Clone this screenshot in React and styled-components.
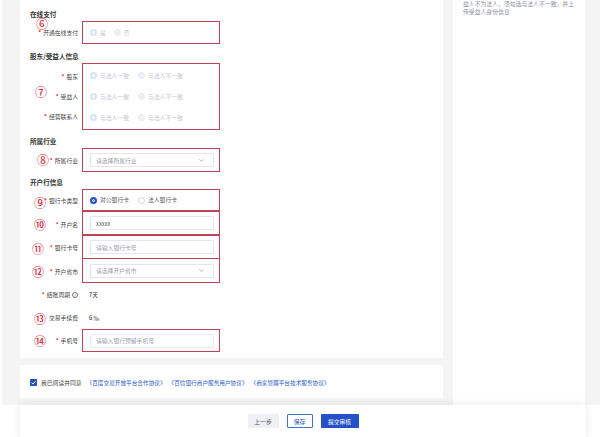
import React from "react";
import styled, { createGlobalStyle } from "styled-components";
import { ChevronDown } from "lucide-react";

const GlobalStyle = createGlobalStyle`
  html, body {
    margin: 0;
    padding: 0;
    height: 437px;
    overflow: hidden;
    background: #fff;
    font-family: "Noto Sans CJK SC", "Noto Sans", sans-serif;
  }
  * {
    box-sizing: border-box;
  }
`;

function App() {
  return (
    <Page>
      <GlobalStyle />
      <Content>
        <MainColumn>
          <FormCard>
            <Heading>在线支付</Heading>
            <Field>
              <Marker $left={16} $top={-3}>⑥</Marker>
              <Label>开通在线支付</Label>
              <RedBox $height={23}>
                <RadioRow first="是" second="否" gap={8} disabled />
              </RedBox>
            </Field>

            <Heading $height={19}>股东/受益人信息</Heading>
            <Field>
              <Marker $left={15} $top={23}>⑦</Marker>
              <LabelStack>
                <Label>股东</Label>
                <Label>受益人</Label>
                <Label>经营联系人</Label>
              </LabelStack>
              <RedBox $height={67}>
                <RadioStack>
                  <RadioRow first="与法人一致" second="与法人不一致" disabled />
                  <RadioRow first="与法人一致" second="与法人不一致" disabled />
                  <RadioRow first="与法人一致" second="与法人不一致" disabled />
                </RadioStack>
              </RedBox>
            </Field>

            <Heading $height={18}>所属行业</Heading>
            <Field>
              <Marker $left={17} $top={6}>⑧</Marker>
              <Label>所属行业</Label>
              <RedBox $height={24}>
                <Select placeholder="请选择所属行业" />
              </RedBox>
            </Field>

            <Heading $height={17}>开户行信息</Heading>
            <Field>
              <Marker $left={14} $top={8}>⑨</Marker>
              <Label>银行卡类型</Label>
              <RedBox $height={23} $thick>
                <RadioRow first="对公银行卡" second="法人银行卡" />
              </RedBox>
            </Field>
            <Field>
              <Marker $left={14} $top={7}>⑩</Marker>
              <Label>开户名</Label>
              <RedBox $height={25} $thick $joined>
                <TextBox>xxxxx</TextBox>
              </RedBox>
            </Field>
            <Field>
              <Marker $left={12} $top={7}>⑪</Marker>
              <Label>银行卡号</Label>
              <RedBox $height={24} $joined>
                <TextBox $placeholder>请输入银行卡号</TextBox>
              </RedBox>
            </Field>
            <Field>
              <Marker $left={12} $top={7}>⑫</Marker>
              <Label>开户省市</Label>
              <RedBox $height={25} $joined>
                <Select placeholder="请选择开户省市" />
              </RedBox>
            </Field>

            <InfoRow>
              <Label>
                结账周期<Hint>?</Hint>
              </Label>
              <Value>7天</Value>
            </InfoRow>
            <InfoRow>
              <Marker $left={14} $top={7}>⑬</Marker>
              <Label $plain>交易手续费</Label>
              <Value>6 ‰</Value>
            </InfoRow>
            <Field>
              <Marker $left={14} $top={6}>⑭</Marker>
              <Label>手机号</Label>
              <RedBox $height={23}>
                <TextBox $placeholder $light>请输入银行预留手机号</TextBox>
              </RedBox>
            </Field>
          </FormCard>

          <AgreementCard>
            <CheckMark viewBox="0 0 7 7">
              <rect width="7" height="7" rx="0.8" fill="#2450c0" />
              <path d="M1.5 3.6 L3 5 L5.6 2.1" fill="none" stroke="#fff" strokeWidth="0.9" />
            </CheckMark>
            <AgreeText>我已阅读并同意</AgreeText>
            <Links>
              <a>《百度交易开放平台合作协议》</a>
              <a>《百信银行商户服务用户协议》</a>
              <a>《商家管理平台技术服务协议》</a>
            </Links>
          </AgreementCard>
        </MainColumn>

        <SidePanel>
          <SideText>益人不为法人，须勾选与法人不一致，并上传受益人身份信息</SideText>
        </SidePanel>
      </Content>

      <Footer>
        <FooterButton>上一步</FooterButton>
        <FooterButton $variant="outline">保存</FooterButton>
        <FooterButton $variant="primary">提交审核</FooterButton>
      </Footer>
    </Page>
  );
}

function RadioRow({ first, second, gap, disabled }) {
  return (
    <Radios $gap={gap}>
      <RadioOption $disabled={disabled}>
        <RadioDot $checked $disabled={disabled} />
        {first}
      </RadioOption>
      <RadioOption $disabled={disabled}>
        <RadioDot $disabled={disabled} />
        {second}
      </RadioOption>
    </Radios>
  );
}

function Select({ placeholder }) {
  return (
    <TextBox $placeholder>
      {placeholder}
      <ChevronDown size={7} color="#7d8494" strokeWidth={2} />
    </TextBox>
  );
}

export default App;

const Page = styled.div`
  width: 600px;
  height: 437px;
  padding-left: 2px;
  overflow: hidden;
  display: flex;
  flex-direction: column;
`;
const Content = styled.div`
  height: 405px;
  padding: 0 15px 0 18px;
  background: #f4f4f5;
  display: flex;
  gap: 10px;
`;
const MainColumn = styled.div`
  width: 423px;
  display: flex;
  flex-direction: column;
  gap: 7px;
`;
const FormCard = styled.div`
  height: 358px;
  padding-top: 7px;
  background: #fff;
`;
const Heading = styled.div`
  height: ${(p) => p.$height || 14}px;
  padding: 0 0 2px 10px;
  display: flex;
  align-items: flex-end;
  font-size: 6.6px;
  line-height: 10px;
  font-weight: 700;
  color: #333;
`;
const Field = styled.div`
  position: relative;
  display: grid;
  grid-template-columns: 62px 138px;
`;
const InfoRow = styled(Field)`
  height: 23px;
  align-items: center;
`;
const LabelStack = styled.div`
  padding: 3px 0;
  display: grid;
  grid-auto-rows: 1fr;
`;
const Label = styled.div`
  padding-right: 4px;
  display: flex;
  align-items: center;
  justify-content: flex-end;
  font-size: 5.8px;
  color: #444;

  &::before {
    content: "${(p) => (p.$plain ? "" : "*")}";
    margin-right: 2px;
    color: #d83a3a;
    font-weight: 700;
  }
`;
const Hint = styled.span`
  width: 6px;
  height: 6px;
  margin-left: 2px;
  border: 0.6px solid #777;
  border-radius: 50%;
  display: inline-flex;
  align-items: center;
  justify-content: center;
  font-size: 4px;
  color: #777;
`;
const Marker = styled.span`
  position: absolute;
  left: ${(p) => p.$left}px;
  top: ${(p) => p.$top}px;
  font-size: 12px;
  font-weight: 500;
  line-height: 11px;
  color: #d63348;
`;
const RedBox = styled.div`
  height: ${(p) => p.$height}px;
  margin-top: ${(p) => (p.$joined ? "-1px" : "0")};
  padding: 0 5px 0 7px;
  border: 1.4px solid #bf4257;
  border-bottom-width: ${(p) => (p.$thick ? "2px" : "1.4px")};
  display: flex;
  align-items: center;
`;
const RadioStack = styled.div`
  width: 100%;
  height: 100%;
  padding: 1px 0;
  display: grid;
  grid-auto-rows: 1fr;
  align-items: center;
`;
const Radios = styled.div`
  display: flex;
  gap: ${(p) => p.$gap || 9}px;
`;
const RadioOption = styled.label`
  display: flex;
  align-items: center;
  gap: 3px;
  font-size: 5.8px;
  line-height: 10px;
  color: ${(p) => (p.$disabled ? "#c3c7d2" : "#555")};
`;
const RadioDot = styled.span`
  width: 7px;
  height: 7px;
  border-radius: 50%;
  background: #fff;
  border: ${(p) =>
    p.$checked
      ? p.$disabled
        ? "2px solid #d6e2f7"
        : "2px solid #2450c8"
      : p.$disabled
      ? "0.7px solid #e6e9f0"
      : "0.7px solid #cfd3dc"};
  ${(p) => p.$disabled && !p.$checked && "background: #eff1f6;"}
  ${(p) => p.$checked && !p.$disabled && "background: #2450c8; box-shadow: inset 0 0 0 1px #fff;"}
`;
const TextBox = styled.div`
  width: 100%;
  height: 14px;
  padding: 0 8px 0 5px;
  border: 1px solid ${(p) => (p.$light ? "#e8ebf0" : "#e3e6ec")};
  border-radius: 1px;
  display: flex;
  align-items: center;
  justify-content: space-between;
  font-size: 5.8px;
  color: ${(p) => (p.$placeholder ? "#9aa0ad" : "#555")};
`;
const Value = styled.div`
  padding-left: 7px;
  font-size: 5.8px;
  font-weight: 500;
  color: #444;
`;
const AgreementCard = styled.div`
  height: 33px;
  padding-left: 10px;
  background: #fff;
  display: flex;
  align-items: center;
  padding-top: 1px;
`;
const CheckMark = styled.svg`
  width: 7px;
  height: 7px;
  margin-right: 4px;
`;
const AgreeText = styled.span`
  margin-right: 5px;
  font-size: 5.8px;
  color: #444;
`;
const Links = styled.div`
  display: flex;
  gap: 3px;
  font-size: 5.65px;
  color: #2a58c6;
`;
const SidePanel = styled.div`
  width: 132px;
  padding: 0 10px;
  background: #fff;
`;
const SideText = styled.div`
  font-size: 5.85px;
  line-height: 8px;
  color: #8a8f99;
`;
const Footer = styled.div`
  position: relative;
  width: 566px;
  height: 32px;
  margin-left: 18px;
  background: #fff;
  box-shadow: 0 0 8px rgba(0, 0, 0, 0.1);
  display: flex;
  align-items: center;
  justify-content: center;
  gap: 8px;
`;
const FooterButton = styled.button`
  height: 14px;
  padding: 0;
  width: ${(p) =>
    p.$variant === "primary" ? "38px" : p.$variant === "outline" ? "26px" : "31px"};
  border-radius: 1px;
  border: ${(p) => (p.$variant === "outline" ? "1px solid #4a6fcb" : "none")};
  background: ${(p) =>
    p.$variant === "primary" ? "#2450c8" : p.$variant === "outline" ? "#fff" : "#eef0f5"};
  color: ${(p) =>
    p.$variant === "primary" ? "#fff" : p.$variant === "outline" ? "#2450c8" : "#555"};
  font-family: inherit;
  font-size: 5.8px;
`;
